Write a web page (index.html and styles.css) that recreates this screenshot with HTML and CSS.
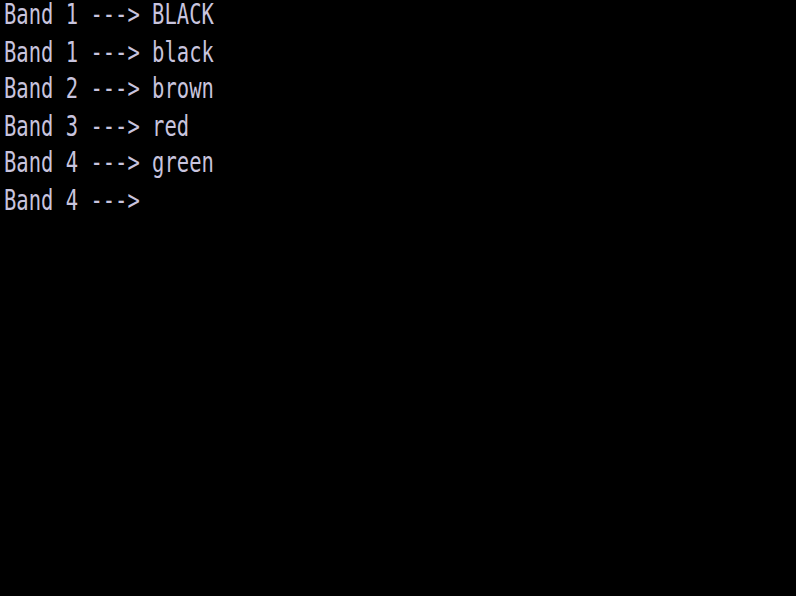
FILE: index.html
```html
<!DOCTYPE html>
<html>
<head>
<meta charset="utf-8">
<link rel="stylesheet" href="styles.css">
</head>
<body>
<pre class="screen"><div class="line">Band 1 ---&gt; BLACK</div><div class="line">Band 1 ---&gt; black</div><div class="line">Band 2 ---&gt; brown</div><div class="line">Band 3 ---&gt; red</div><div class="line">Band 4 ---&gt; green</div><div class="line">Band 4 ---&gt;</div></pre>
</body>
</html>
```
FILE: styles.css
```css
html, body {
  margin: 0;
  padding: 0;
  background: #000;
  width: 796px;
  height: 596px;
  overflow: hidden;
}
.screen {
  margin: 0 0 0 4px;
  padding-top: 1px;
  font-family: "DejaVu Sans Mono", monospace;
  font-size: 20.5px;
  line-height: 18px;
  color: #c8c4de;
  transform: scaleY(1.4);
  transform-origin: 0 0;
}
.line {
  height: 26.6px;
}
```
